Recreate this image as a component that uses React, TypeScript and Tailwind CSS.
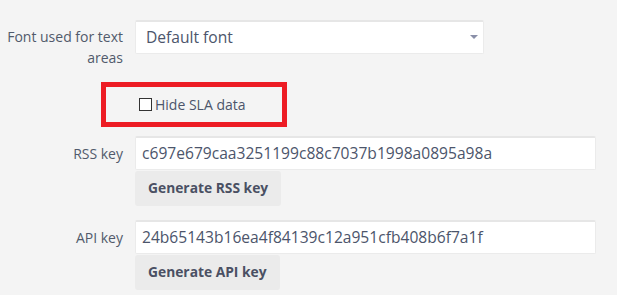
function Label({ children, className = "" }: { children: React.ReactNode; className?: string }) {
  return (
    <div className={`w-[123px] shrink-0 text-right text-[14px] leading-[21px] text-[#515a6b] ${className}`}>
      {children}
    </div>
  );
}

function KeyRow({ label, value, button }: { label: string; value: string; button: string }) {
  return (
    <div className="flex items-start">
      <Label className="pt-[7px]">{label}</Label>
      <div className="ml-3 flex flex-col items-start">
        <div className="h-[34px] w-[461px] bg-white border border-[#ebebeb] border-t-2 border-t-[#e6e6e6] rounded-[2px] pl-[6px] text-[15.6px] leading-[31px] text-[#4c556b]">
          {value}
        </div>
        <button className="mt-px h-[35px] px-[13px] rounded-[3px] bg-[#ebebeb] text-[13.8px] font-bold text-[#4a5063]">
          {button}
        </button>
      </div>
    </div>
  );
}

export default function App() {
  return (
    <div
      className="w-[617px] h-[295px] overflow-hidden bg-[#f4f4f4] pt-5"
      style={{ fontFamily: '"Open Sans", "Noto Sans", sans-serif' }}
    >
      <div className="flex items-start">
        <Label className="pt-[6px]">
          Font used for text
          <br />
          areas
        </Label>
        <div className="ml-3 relative h-[34px] w-[349px] bg-white border border-[#ebebeb] border-t-2 border-t-[#e6e6e6] rounded-[2px] pl-[10px] text-[15.6px] leading-[31px] text-[#4c556b]">
          Default font
          <span className="absolute right-[5px] top-[13px] w-0 h-0 border-l-[4px] border-r-[4px] border-t-[4px] border-l-transparent border-r-transparent border-t-[#8a8fa8]" />
        </div>
      </div>

      <div className="ml-[101px] mt-[14px] w-[186px] h-[45px] border-[5px] border-[#ed1c24] flex items-center pl-[33px]">
        <span className="w-[13px] h-[13px] border border-[#333] bg-white" />
        <span className="ml-[3px] text-[14px] text-[#4c556b]">Hide SLA data</span>
      </div>

      <div className="mt-[9px] flex flex-col gap-[14px]">
        <KeyRow label="RSS key" value="c697e679caa3251199c88c7037b1998a0895a98a" button="Generate RSS key" />
        <KeyRow label="API key" value="24b65143b16ea4f84139c12a951cfb408b6f7a1f" button="Generate API key" />
      </div>
    </div>
  );
}
